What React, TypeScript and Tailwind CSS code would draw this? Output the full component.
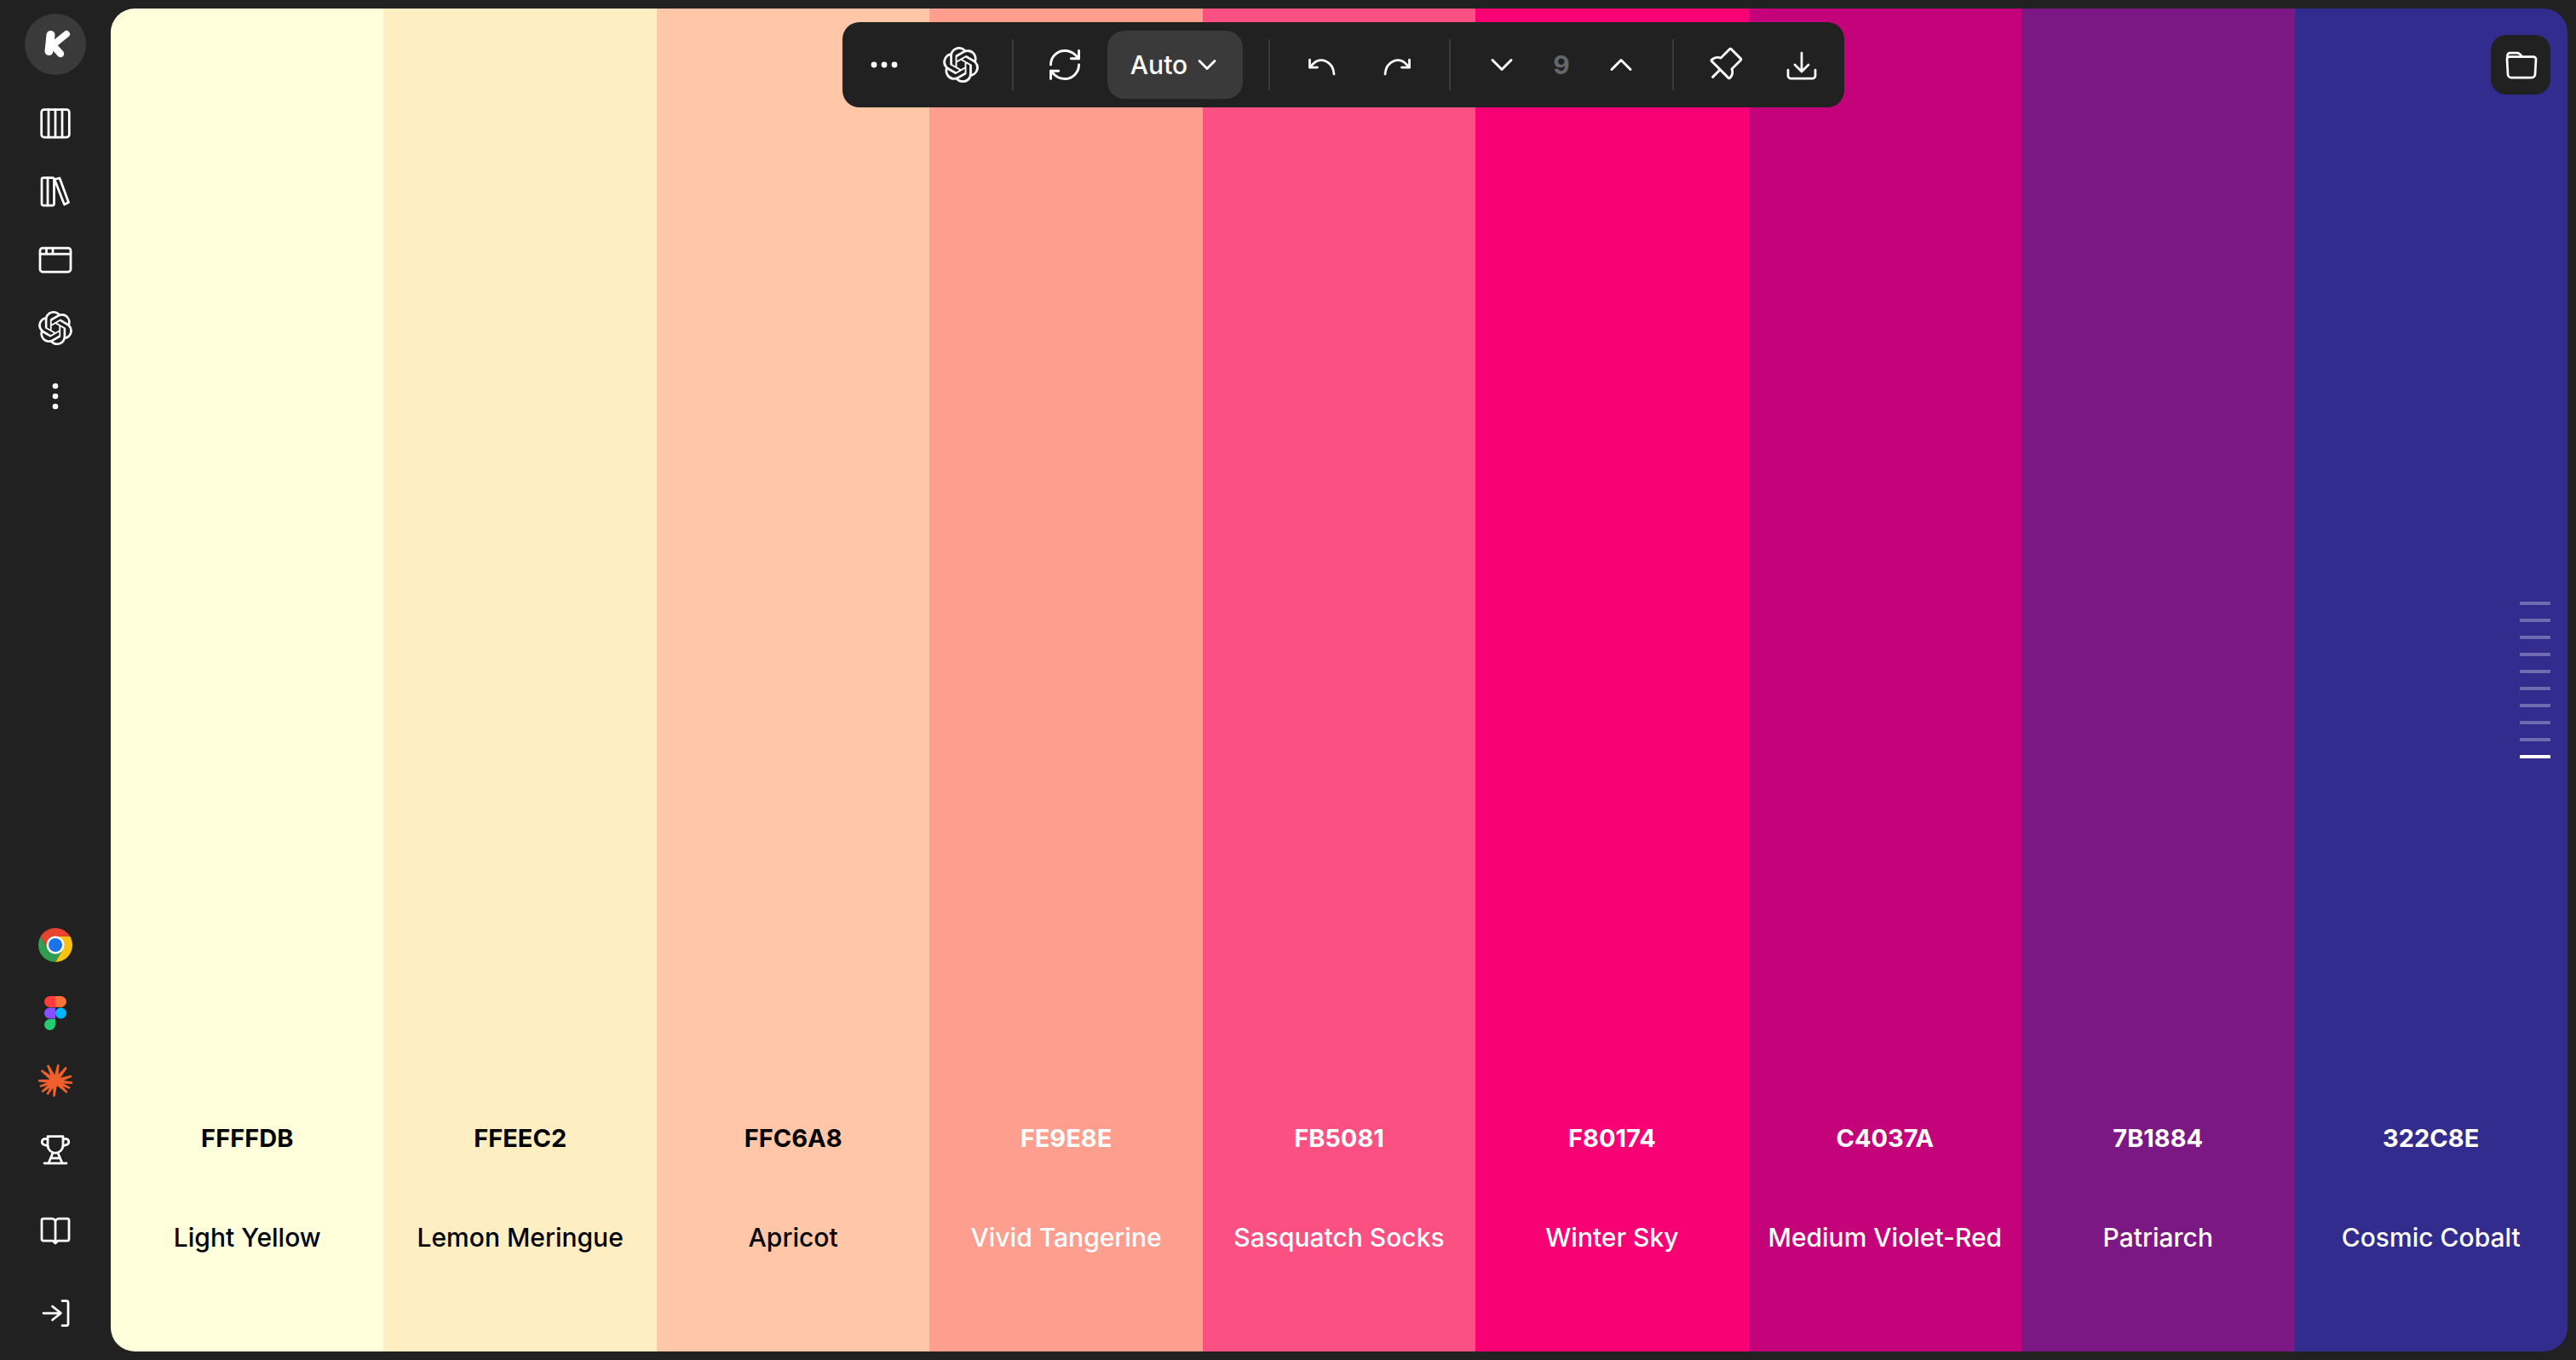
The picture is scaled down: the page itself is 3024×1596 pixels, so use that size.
import React from "react";
import { RefreshCw, ChevronDown, ChevronUp } from "lucide-react";
import { SiOpenai } from "react-icons/si";
import { PiPushPin } from "react-icons/pi";

const swatches = [
  { hex: "FFFFDB", name: "Light Yellow", bg: "bg-[#ffffdb]", fg: "text-black" },
  { hex: "FFEEC2", name: "Lemon Meringue", bg: "bg-[#ffeec2]", fg: "text-black" },
  { hex: "FFC6A8", name: "Apricot", bg: "bg-[#ffc6a8]", fg: "text-black" },
  { hex: "FE9E8E", name: "Vivid Tangerine", bg: "bg-[#fe9e8e]", fg: "text-white" },
  { hex: "FB5081", name: "Sasquatch Socks", bg: "bg-[#fb5081]", fg: "text-white" },
  { hex: "F80174", name: "Winter Sky", bg: "bg-[#f80174]", fg: "text-white" },
  { hex: "C4037A", name: "Medium Violet-Red", bg: "bg-[#c4037a]", fg: "text-white" },
  { hex: "7B1884", name: "Patriarch", bg: "bg-[#7b1884]", fg: "text-white" },
  { hex: "322C8E", name: "Cosmic Cobalt", bg: "bg-[#322c8e]", fg: "text-white" },
];

// burst logo: [angle, length, base half width]
const rays = [
  [-115, 21, 3], [-80, 20, 2.8], [-52, 21, 3], [-18, 20, 2.6], [5, 20, 2.2], [25, 19, 2.2],
  [44, 19, 2.6], [95, 18, 2.6], [122, 18, 2.2], [142, 20, 2.6], [162, 19, 2.2], [182, 20, 2.4],
  [218, 21, 3],
];

function rayPoints(deg: number, len: number, half: number) {
  const a = (deg * Math.PI) / 180;
  const nx = -Math.sin(a);
  const ny = Math.cos(a);
  const tipX = 20 + len * Math.cos(a);
  const tipY = 20 + len * Math.sin(a);
  return [
    [20 + nx * half, 20 + ny * half],
    [tipX + nx * 1.2, tipY + ny * 1.2],
    [tipX - nx * 1.2, tipY - ny * 1.2],
    [20 - nx * half, 20 - ny * half],
  ]
    .map((p) => p.join(","))
    .join(" ");
}

function Icon({ children }: { children: React.ReactNode }) {
  return (
    <svg width="40" height="40" viewBox="0 0 40 40" fill="none" stroke="currentColor" strokeWidth="2.75" strokeLinecap="round" strokeLinejoin="round">
      {children}
    </svg>
  );
}

function RailItem({ children, className = "" }: { children: React.ReactNode; className?: string }) {
  return <div className={`flex h-[80px] w-full shrink-0 items-center justify-center text-white ${className}`}>{children}</div>;
}

function ToolButton({ children }: { children: React.ReactNode }) {
  return <button className="flex h-[80px] w-[80px] shrink-0 items-center justify-center text-white">{children}</button>;
}

function Sidebar() {
  return (
    <aside className="flex h-full w-[130px] shrink-0 flex-col items-center pt-[16px] pb-[15px]">
      <div className="mb-[17px] flex h-[72px] w-[72px] shrink-0 items-center justify-center rounded-full bg-[#3a3a3a]">
        <svg width="72" height="72" viewBox="0 0 72 72" fill="none" stroke="white" strokeLinecap="round" strokeLinejoin="round">
          <path d="M30.5 25L28.5 44" strokeWidth="10" />
          <path d="M33 37L49 24" strokeWidth="8" />
          <path d="M33 37L42 47" strokeWidth="8.5" />
        </svg>
      </div>
      <RailItem>
        <Icon>
          <rect x="3.7" y="3.5" width="32.6" height="32.5" rx="3" />
          <path d="M12 3.5V36M20 3.5V36M28 3.5V36" />
        </Icon>
      </RailItem>
      <RailItem>
        <Icon>
          <rect x="4" y="3.5" width="14.5" height="32.5" rx="2" />
          <path d="M11 3.5V36" />
          <path d="M19 5.5L25 4L35.5 32.5L30.5 35Z" />
        </Icon>
      </RailItem>
      <RailItem>
        <Icon>
          <rect x="2" y="6" width="36" height="28" rx="3" />
          <path d="M2 13H38M9.5 6V13M17 6V13" />
        </Icon>
      </RailItem>
      <RailItem>
        <SiOpenai size={40} />
      </RailItem>
      <RailItem>
        <svg width="40" height="40" viewBox="0 0 40 40" fill="white">
          <circle cx="20" cy="8" r="3.3" />
          <circle cx="20" cy="20" r="3.3" />
          <circle cx="20" cy="32" r="3.3" />
        </svg>
      </RailItem>

      <div className="flex-1" />

      <RailItem>
        <svg width="40" height="40" viewBox="0 0 40 40">
          <path d="M20 10H37.3A20 20 0 0 0 2.7 10L11.34 25Z" fill="#e8432f" />
          <path d="M37.3 10A20 20 0 0 1 20 40L28.66 25L20 10Z" fill="#fcc10f" />
          <path d="M2.7 10A20 20 0 0 0 20 40L28.66 25H11.34Z" fill="#2f9e50" />
          <circle cx="20" cy="20" r="10.5" fill="white" />
          <circle cx="20" cy="20" r="8" fill="#1a73e8" />
        </svg>
      </RailItem>
      <RailItem>
        <svg width="26" height="40" viewBox="0 0 26 40">
          <path d="M13 0H6.5a6.5 6.5 0 0 0 0 13H13Z" fill="#ff3b3b" />
          <path d="M13 0H19.5a6.5 6.5 0 0 1 0 13H13Z" fill="#ff7237" />
          <path d="M13 13.5H6.5a6.5 6.5 0 0 0 0 13H13Z" fill="#874fff" />
          <circle cx="19.5" cy="20" r="6.5" fill="#00b6ff" />
          <path d="M13 27H6.5a6.5 6.5 0 1 0 6.5 6.5Z" fill="#24cb71" />
        </svg>
      </RailItem>
      <RailItem>
        <svg width="40" height="40" viewBox="0 0 40 40" fill="#f05f2c">
          <circle cx="20" cy="20" r="6" />
          {rays.map(([deg, len, half]) => (
            <polygon key={deg} points={rayPoints(deg, len, half)} />
          ))}
        </svg>
      </RailItem>
      <RailItem>
        <Icon>
          <path d="M11 4.5H29V15A9 9 0 0 1 11 15Z" />
          <path d="M11 7.5H8a3.5 3.5 0 0 0-.5 7L11 16M29 7.5H32a3.5 3.5 0 0 1 .5 7L29 16" />
          <path d="M17 24L12 36M23 24L28 36M14.5 30H25.5M7 36H33" />
        </Icon>
      </RailItem>
      <RailItem className="mt-[15px]">
        <Icon>
          <path d="M20 10a4 4 0 0 1 4-4H34a2 2 0 0 1 2 2V30a2 2 0 0 1-2 2H23L20 35L17 32H6a2 2 0 0 1-2-2V8a2 2 0 0 1 2-2H16a4 4 0 0 1 4 4V34" />
        </Icon>
      </RailItem>
      <RailItem className="mt-[17px]">
        <Icon>
          <path d="M6 20H26M16.5 12L26.5 20L16.5 28" />
          <path d="M28 5.5H33a2 2 0 0 1 2 2V32.5a2 2 0 0 1-2 2H28" />
        </Icon>
      </RailItem>
    </aside>
  );
}

function Toolbar() {
  return (
    <div className="absolute top-[16px] left-[859px] flex h-[100px] w-[1176px] items-center gap-[10px] rounded-[20px] bg-[#212121] pl-[9px]">
      <ToolButton>
        <svg width="40" height="40" viewBox="0 0 40 40" fill="white">
          <circle cx="8" cy="20" r="3.4" />
          <circle cx="20" cy="20" r="3.4" />
          <circle cx="32" cy="20" r="3.4" />
        </svg>
      </ToolButton>
      <ToolButton>
        <SiOpenai size={42} />
      </ToolButton>
      <div className="mx-[10px] h-[60px] w-[2px] shrink-0 bg-[#3a3a3a]" />
      <ToolButton>
        <RefreshCw size={44} strokeWidth={1.6} />
      </ToolButton>
      <button className="flex h-[80px] w-[159px] shrink-0 items-center justify-center gap-[5px] rounded-[20px] bg-[#3a3a3a] pl-[3px] font-['Inter',sans-serif] text-[30px] font-medium text-white">
        Auto
        <ChevronDown size={36} strokeWidth={1.9} />
      </button>
      <div className="mr-[10px] ml-[20px] h-[60px] w-[2px] shrink-0 bg-[#3a3a3a]" />
      <ToolButton>
        <Icon>
          <path d="M6.5 14V23H15.5" />
          <path d="M6.5 23L11 18.5C19 11 34 15 35 31" />
        </Icon>
      </ToolButton>
      <ToolButton>
        <Icon>
          <path d="M33.5 14V23H24.5" />
          <path d="M33.5 23L29 18.5C21 11 6 15 5 31" />
        </Icon>
      </ToolButton>
      <div className="mx-[10px] h-[60px] w-[2px] shrink-0 bg-[#3a3a3a]" />
      <div className="flex items-center">
        <ToolButton>
          <ChevronDown size={44} strokeWidth={1.6} />
        </ToolButton>
        <span className="w-[60px] text-center font-['Inter',sans-serif] text-[30px] font-bold text-[#666666]">9</span>
        <ToolButton>
          <ChevronUp size={44} strokeWidth={1.6} />
        </ToolButton>
      </div>
      <div className="mx-[10px] h-[60px] w-[2px] shrink-0 bg-[#3a3a3a]" />
      <ToolButton>
        <PiPushPin size={46} />
      </ToolButton>
      <ToolButton>
        <Icon>
          <path d="M20 6V28M12 20L20 28L28 20" />
          <path d="M4 26V33a3 3 0 0 0 3 3H33a3 3 0 0 0 3-3V26" />
        </Icon>
      </ToolButton>
    </div>
  );
}

function ScrollTicks() {
  return (
    <div className="absolute top-[696px] right-[20px] flex flex-col gap-[16px]">
      {Array.from({ length: 9 }).map((_, i) => (
        <div key={i} className="h-[4px] w-[36px] rounded-[1px] bg-white/30" />
      ))}
      <div className="h-[4px] w-[36px] rounded-[1px] bg-white" />
    </div>
  );
}

export default function App() {
  return (
    <div className="flex h-[1596px] w-[3024px] overflow-hidden bg-[#212121]">
      <Sidebar />
      <main className="relative my-[10px] mr-[10px] flex flex-1 overflow-hidden rounded-[28px]">
        {swatches.map((s) => (
          <div key={s.hex} className={`flex flex-1 flex-col items-center justify-end pb-[114px] font-['Inter',sans-serif] ${s.bg} ${s.fg}`}>
            <div className="text-[29px] leading-[40px] font-bold">{s.hex}</div>
            <div className="mt-[76px] text-[30px] leading-[40px] font-medium">{s.name}</div>
          </div>
        ))}
        <Toolbar />
        <button className="absolute top-[31px] right-[20px] flex h-[70px] w-[70px] items-center justify-center rounded-[18px] bg-[#212121] pl-[2px] text-white">
          <Icon>
            <path d="M3.5 12V9a3 3 0 0 1 3-3H15c3 0 4 2 5.5 4.5" />
            <path d="M3 13.5a3 3 0 0 1 3-3H34a3 3 0 0 1 3 3L36 31a4 4 0 0 1-4 4H8a4 4 0 0 1-4-4Z" />
          </Icon>
        </button>
        <ScrollTicks />
      </main>
    </div>
  );
}
